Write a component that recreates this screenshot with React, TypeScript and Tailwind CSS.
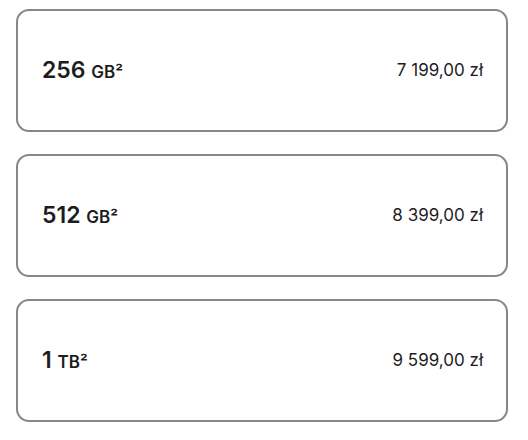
const options = [
  { size: "256", unit: "GB", price: "7 199,00 zł" },
  { size: "512", unit: "GB", price: "8 399,00 zł" },
  { size: "1", unit: "TB", price: "9 599,00 zł" },
];

export default function App() {
  return (
    <div className="min-h-screen bg-white pl-4 pr-5 pt-[9px] font-['Inter',sans-serif] text-[#1d1d1f]">
      <div className="flex flex-col gap-[22px]">
        {options.map((opt) => (
          <div
            key={opt.size}
            className="flex h-[123px] items-center justify-between rounded-[13px] border-2 border-[#86868b] pl-[24px] pr-[23px]"
          >
            <span className="text-[23px] font-semibold">
              {opt.size}{" "}
              <span className="text-[17px] font-semibold">{opt.unit}²</span>
            </span>
            <span className="text-[17px]">{opt.price}</span>
          </div>
        ))}
      </div>
    </div>
  );
}
